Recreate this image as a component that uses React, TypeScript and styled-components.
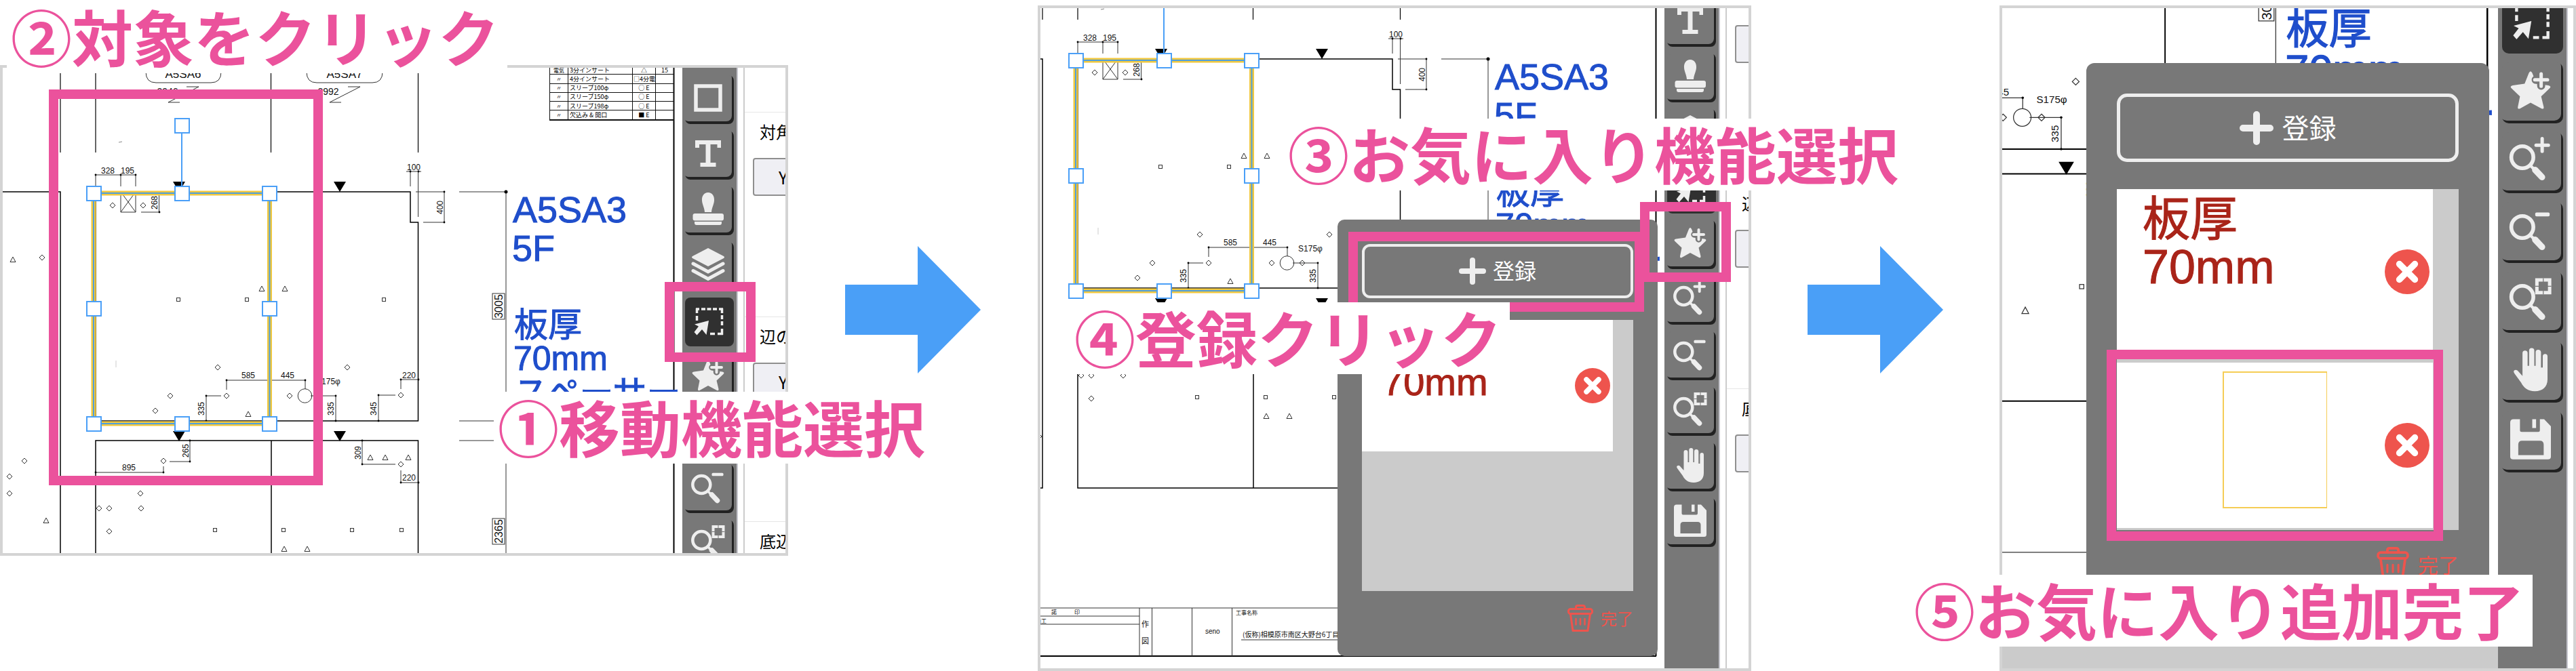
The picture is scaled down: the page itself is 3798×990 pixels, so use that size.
import React from "react";
import styled, { createGlobalStyle } from "styled-components";

const PINK = "#eb529c";
const GRAY = "#787878";
const LIGHT = "#eeeeee";
const BLUE = "#4a9ff7";
const SANS = `"Liberation Sans", "Noto Sans CJK JP", sans-serif`;
const JP = `"Noto Sans CJK JP", "Liberation Sans", sans-serif`;

const GlobalStyle = createGlobalStyle`
  * { box-sizing: border-box; }
  body { margin: 0; background: #fff; font-family: ${JP}; }
  button { font: inherit; color: inherit; margin: 0; padding: 0; border: 0; background: none; cursor: pointer; }
`;

type Sized = { $large?: boolean };
const size = (normal: number, large: number) => (p: Sized) => `${p.$large ? large : normal}px`;

/* ---------- page ---------- */

const Page = styled.main`
  display: grid;
  grid-template-columns: 1162fr 368px 1052fr 366px 850fr;
  align-items: start;
  overflow: hidden;
`;

const Step = styled.section<{ $top: number }>`
  position: relative;
  min-width: 0;
  padding-top: ${(p) => p.$top}px;
`;

const Shot = styled.div<{ $height: number }>`
  display: flex;
  height: ${(p) => p.$height}px;
  border: 4px solid #d4d4d4;
  overflow: hidden;
`;

const Workspace = styled.div`
  position: relative;
  flex: 1;
  min-width: 0;
  overflow: hidden;
`;

const ArrowCell = styled.div`
  display: flex;
  justify-content: center;
  padding-top: 363px;
`;

const StepLabel = styled.h2<{ $left: number; $top: number }>`
  position: absolute;
  z-index: 3;
  left: ${(p) => p.$left}px;
  top: ${(p) => p.$top}px;
  margin: 0;
  padding: 0 12px 6px 6px;
  background: #fff;
  color: ${PINK};
  font-size: 90px;
  line-height: 100px;
  font-weight: 700;
  white-space: nowrap;
`;

const Highlight = styled.div<{ $left: number; $top: number; $width: number; $height: number }>`
  position: absolute;
  z-index: 2;
  left: ${(p) => p.$left}px;
  top: ${(p) => p.$top}px;
  width: ${(p) => p.$width}px;
  height: ${(p) => p.$height}px;
  border: 14px solid ${PINK};
  pointer-events: none;
`;

/* ---------- toolbar ---------- */

const Toolbar = styled.nav<Sized>`
  flex: none;
  width: ${size(80, 101)};
  background: ${GRAY};
  overflow: hidden;
`;

const ToolList = styled.div<Sized & { $offset: number }>`
  display: flex;
  flex-direction: column;
  align-items: center;
  gap: ${size(10, 13)};
  margin-top: ${(p) => p.$offset}px;
`;

const ToolButton = styled.button<Sized & { $active?: boolean }>`
  width: ${size(72, 90)};
  height: ${size(72, 90)};
  padding: ${(p) => (p.$large ? "12px 18px 18px 12px" : "10px 14px 14px 10px")};
  border-radius: ${size(8, 10)};
  background: ${(p) => (p.$active ? "#303030" : GRAY)};
  box-shadow: ${(p) => (p.$active ? "none" : "inset -3px -4px 0 #222")};
  svg { display: block; width: 100%; height: 100%; overflow: visible; }
`;

const Gutter = styled.div<{ $width: number }>`
  flex: none;
  width: ${(p) => p.$width}px;
  border-left: 2px solid #c6c6ce;
  background: #fff;
`;

/* ---------- side panel ---------- */

const SidePanel = styled.aside<{ $width: number }>`
  flex: none;
  width: ${(p) => p.$width}px;
  border-left: 2px solid #cccccc;
  overflow: hidden;
`;

const SideList = styled.div<{ $offset: number }>`
  margin-top: ${(p) => p.$offset}px;
`;

const Field = styled.div`
  width: 240px;
  padding: 14px 12px 178px;
  border-top: 1px solid #e6e6e6;
`;

const FieldName = styled.div`
  padding-left: 10px;
  margin-bottom: 25px;
  font-size: 24px;
  line-height: 28px;
  color: #000;
`;

const FieldButton = styled.button`
  display: block;
  width: 180px;
  height: 56px;
  padding-left: 36px;
  border: 2px solid #8f8f8f;
  border-radius: 4px;
  background: #efeff4;
  font-size: 25px;
  line-height: 28px;
  text-align: left;
`;

/* ---------- favourites popup ---------- */

const Popup = styled.div<Sized>`
  position: absolute;
  top: ${size(312, 81)};
  right: ${size(10, 13)};
  display: flex;
  flex-direction: column;
  width: ${size(472, 594)};
  height: ${size(644, 811)};
  padding: ${size(36, 45)};
  border-radius: ${size(10, 12)};
  background: ${GRAY};
`;

const RegisterButton = styled.button<Sized>`
  display: flex;
  flex: none;
  align-items: center;
  justify-content: center;
  gap: ${size(10, 13)};
  height: ${size(80, 101)};
  padding-bottom: 4px;
  border: ${size(4, 5)} solid ${LIGHT};
  border-radius: ${size(12, 15)};
  color: #fff;
  font-size: ${size(32, 40)};
  line-height: ${size(36, 44)};
  svg { width: ${size(40, 50)}; height: ${size(40, 50)}; margin-top: 4px; }
`;

const FavoriteList = styled.ul<Sized>`
  flex: none;
  display: flex;
  flex-direction: column;
  gap: ${size(10, 12)};
  height: ${size(400, 503)};
  margin: ${size(32, 40)} 0 ${size(20, 25)};
  padding: 0 ${size(30, 38)} 0 0;
  background: #cbcbcb;
  list-style: none;
`;

const Favorite = styled.li<Sized>`
  display: flex;
  align-items: center;
  height: ${size(194, 244)};
  padding-right: ${size(4, 5)};
  background: #fff;
`;

const NoteThumb = styled.div<Sized>`
  flex: 1;
  align-self: flex-start;
  padding: ${(p) => (p.$large ? "10px 0 0 38px" : "8px 0 0 30px")};
  color: #a92419;
  font-family: ${SANS};
  font-size: ${size(56, 70)};
  line-height: ${size(56, 70)};
  -webkit-text-stroke: 1px #a92419;
`;

const ShapeThumb = styled.div`
  flex: 1;
  align-self: flex-start;
  display: flex;
  justify-content: center;
  padding: 13px 0 0 71px;
`;

const Shape = styled.div`
  width: 154px;
  height: 202px;
  border: 2px solid #f5cd55;
  border-right-width: 1px;
`;

const DeleteButton = styled.button<Sized>`
  flex: none;
  width: ${size(52, 66)};
  height: ${size(52, 66)};
  border-radius: 50%;
  background: #ee544d;
  svg { display: block; width: 100%; height: 100%; }
`;

const DoneButton = styled.button<Sized>`
  display: flex;
  align-items: center;
  align-self: flex-end;
  gap: ${size(11, 13)};
  color: #ee544d;
  font-size: ${size(24, 30)};
  line-height: ${size(40, 50)};
  svg { width: ${size(38, 48)}; height: ${size(40, 50)}; }
`;

/* ---------- legend on the drawing ---------- */

const Legend = styled.table`
  position: absolute;
  top: -4px;
  right: 12px;
  width: 184px;
  height: 82px;
  border-collapse: collapse;
  table-layout: fixed;
  color: #000;
  font-size: 9px;
  line-height: 9px;
  td {
    padding: 0 1px;
    border: 1px solid #111;
    overflow: hidden;
    white-space: nowrap;
  }
  td:nth-child(1) { width: 27px; font-size: 8px; text-align: center; }
  td:nth-child(2) { width: 95px; padding-left: 2px; }
  td:nth-child(3) { width: 34px; text-align: center; }
  td:nth-child(4) { text-align: center; }
`;

const legendRows = [
  ["電気", "3分インサート", "△", "15"],
  ["〃", "4分インサート", "□4分電", ""],
  ["〃", "スリーブ100φ", "○ E", ""],
  ["〃", "スリーブ150φ", "○ E", ""],
  ["〃", "スリーブ198φ", "○ E", ""],
  ["〃", "欠込み & 開口", "■ E", ""],
  ["", "", "", ""],
];

/* ---------- floor plan ---------- */

const Plan = styled.svg`
  display: block;
  width: 100%;
  height: 100%;
`;

type P = [number, number];
const diamonds: P[] = [
  [166, 303], [211, 303], [62, 380], [321, 542], [512, 542], [251, 584], [334, 584],
  [427, 584], [472, 584], [229, 606], [591, 583], [241, 680], [591, 685], [36, 680],
  [14, 703], [14, 728], [207, 728], [146, 750], [161, 750], [208, 750], [161, 784], [84, 840],
];
const triangles: P[] = [
  [19, 383], [386, 426], [420, 426], [366, 611], [546, 675], [568, 675], [602, 675],
  [68, 768], [419, 810], [453, 810],
];
const squares: P[] = [[263, 442], [364, 442], [566, 442], [317, 782], [418, 782], [519, 782], [592, 782]];
const arrows: P[] = [[264, 268], [501, 268], [264, 636], [501, 636]];
const handles: P[] = [
  [138, 285], [268, 285], [397, 285], [138, 455], [397, 455], [138, 625], [268, 625], [397, 625], [268, 185],
];
const dots: P[] = [
  [141, 258], [178, 258], [200, 258], [605, 253], [617, 253], [655, 283], [655, 328], [235, 313],
  [334, 561], [450, 561], [304, 584], [304, 621], [495, 584], [495, 621], [558, 583], [558, 621],
  [591, 560], [617, 560], [280, 681], [280, 650], [141, 697], [241, 697], [534, 650], [534, 685],
  [591, 712], [617, 712],
];
const dims: [string, number, number][] = [
  ["328", 159, 256], ["195", 188, 256], ["100", 610, 251], ["585", 366, 558], ["445", 424, 558],
  ["220", 603, 558], ["895", 190, 694], ["220", 603, 709],
];
const uprightDims: [string, number, number][] = [
  ["268", 228, 299], ["400", 649, 306], ["335", 297, 603], ["335", 488, 603], ["345", 551, 603],
  ["265", 274, 665], ["309", 528, 668],
];

function FloorPlan({ view }: { view: string }) {
  return (
    <Plan viewBox={view} preserveAspectRatio="xMinYMin slice" role="img" aria-label="図面">
      <rect x="0" y="1198" width="1006" height="60" fill="#cbcbcb" />
      <g fill="none" stroke="#000" strokeWidth="1.5">
        <path d="M0 283H89V916H0M141 916V650H616.500V916ZM400 650V916M141 621V283H605V328H616.500V621ZM400 283V621" />
        <path d="M993.500 0V1164" strokeWidth="2" />
        <path d="M0 1164H994" strokeWidth="2" />
      </g>
      <g fill="none" stroke="#333" strokeWidth="1">
        <path d="M89 90V225M141 90V225M399.500 90V225M616.500 90V225" stroke="#000" strokeWidth="1.200" />
        <path d="M215 90V106Q215 122 230 122H311Q326 122 326 106V90M452 90V106Q452 122 467 122H549Q564 122 564 106V90" />
        <path d="M275 128H293L248 151H265M513 128H531L486 151H503" />
        <path d="M175 210L180 209" stroke="#888" />
        <path d="M171 532V542" stroke="#ccc" />
        <path d="M141 275V258H200V275M178 258V275M178 283V313H200V283M178 283L200 313M200 283L178 313" />
        <path d="M234.500 283V313M208 313H235" />
        <path d="M599 253H621M605 253V275M616.500 253V320M613 283H655V328H624" />
        <path d="M677 283H746V577M746 577V900M677 621H728M677 650H728" />
        <path d="M334 575V561H450V574M304 621V584H326M458 584H495V621M558 621V583H583M591 574V560H616" />
        <path d="M280 650V681H250M141 697H241V688M534 650V685H583M591 694V712H616" />
        <circle cx="449.500" cy="584" r="10.300" />
        <rect x="726" y="433" width="18" height="38" />
        <rect x="726" y="765" width="18" height="38" />
        {diamonds.map(([x, y], i) => (
          <path key={i} d={`M${x} ${y - 4}l4 4l-4 4l-4 -4Z`} />
        ))}
        {triangles.map(([x, y], i) => (
          <path key={i} d={`M${x} ${y - 4}l4 7.500h-8Z`} />
        ))}
        {squares.map(([x, y], i) => (
          <rect key={i} x={x - 2.5} y={y - 2.5} width="5" height="5" />
        ))}
        <path d="M0 1093H994M0 1105H232M0 1117H232M232 1093V1164M250.500 1093V1164M309.500 1093V1164M368.500 1093V1164M382 1140H600" />
      </g>
      <g fill="#000">
        {dots.map(([x, y], i) => (
          <circle key={i} cx={x} cy={y} r="1.400" />
        ))}
        <circle cx="746" cy="283" r="2.500" />
        {arrows.map(([x, y], i) => (
          <path key={i} d={`M${x - 9} ${y}h18l-9 15Z`} />
        ))}
      </g>
      <g fill="#111" fontFamily={SANS} fontSize="12" textAnchor="middle">
        {dims.map(([t, x, y], i) => (
          <text key={i} x={x} y={y}>{t}</text>
        ))}
        {uprightDims.map(([t, x, y], i) => (
          <text key={i} transform={`translate(${x + 4} ${y}) rotate(-90)`}>{t}</text>
        ))}
        <text x="484" y="567">S175φ</text>
        <text x="247" y="140" fontSize="14">3946</text>
        <text x="484" y="140" fontSize="14">2992</text>
        <text x="270" y="115" fontSize="17">A5SA6</text>
        <text x="508" y="115" fontSize="17">A5SA7</text>
        <text transform="translate(741 452) rotate(-90)" fontSize="16">3005</text>
        <text transform="translate(741 784) rotate(-90)" fontSize="16">2365</text>
      </g>
      <g fill="#111" fontFamily={JP} fontSize="8">
        <text x="102" y="1102">諾</text>
        <text x="136" y="1102">印</text>
        <text x="79" y="1115">施工</text>
        <text x="235" y="1121" fontSize="11">作</text>
        <text x="235" y="1146" fontSize="11">図</text>
        <text x="329" y="1131" fontSize="10" fontFamily={SANS}>seno</text>
        <text x="374" y="1103">工事名称</text>
        <text x="384" y="1136" fontSize="10">(仮称)相模原市南区大野台6丁目</text>
      </g>
      <g fill="#1f4ecb" stroke="#1f4ecb" strokeWidth="1" fontFamily={SANS}>
        <text x="756" y="328" fontSize="54">A5SA3</text>
        <text x="755" y="385" fontSize="54">5F</text>
        <text x="758" y="497" fontSize="50">板厚</text>
        <text x="757" y="546" fontSize="50">70mm</text>
        <text x="758" y="597" fontSize="50">スペーサー</text>
      </g>
      <g fill="none">
        <rect x="138" y="285" width="259.500" height="340" stroke="#f0c840" strokeWidth="7" />
        <rect x="138" y="285" width="259.500" height="340" stroke="#4f9fdc" strokeWidth="2" />
        <path d="M268 185V285" stroke={BLUE} strokeWidth="2" />
        {handles.map(([x, y], i) => (
          <rect key={i} x={x - 10} y={y - 10} width="21" height="21" fill="#fff" stroke={BLUE} strokeWidth="2" />
        ))}
      </g>
    </Plan>
  );
}

/* ---------- icons ---------- */

const lens = (
  <>
    <circle cx="14.300" cy="20" r="13" fill="none" stroke={LIGHT} strokeWidth="4.500" />
    <path d="M24 30L28 34" stroke={LIGHT} strokeWidth="3.500" />
    <path d="M29.500 35L37.500 43.500" stroke={LIGHT} strokeWidth="7.500" strokeLinecap="round" />
  </>
);

const icons: Record<string, React.ReactNode> = {
  四角形: <rect x="6" y="6" width="36" height="35" fill="none" stroke={LIGHT} strokeWidth="5.500" />,
  文字: <path d="M5 4H43V15H37.500V10H27.500V37H35.500V43H12.500V37H20.500V10H11V15H5Z" fill={LIGHT} />,
  スタンプ: (
    <g fill={LIGHT}>
      <path d="M24 -1C30 -1 33.500 4 33 11C32.500 17 29.500 21 29 28H19C18.500 21 15.500 17 15 11C14.500 4 18 -1 24 -1Z" />
      <rect x="1.500" y="30" width="45.500" height="10.500" rx="3" />
      <path d="M4 42H44V44Q44 47 41 47H7Q4 47 4 44Z" />
    </g>
  ),
  レイヤー: (
    <g fill={LIGHT}>
      <path d="M24 -1L47 11Q49 12.500 47 14L24 26L1 14Q-1 12.500 1 11Z" />
      <path d="M2 22L24 34L46 22M2 32.500L24 44.500L46 32.500" fill="none" stroke={LIGHT} strokeWidth="5" strokeLinecap="round" />
    </g>
  ),
  移動: (
    <g fill="none" stroke={LIGHT} strokeWidth="3.500">
      <path d="M6 7H11M14 7H20M22.500 7H28.500M31 7H37M40 7H46M7.500 6V13M7.500 17V24M44.500 6V13M44.500 16V22M44.500 25V31M44.500 36V45M46 43.500H38M34 43.500H27" />
      <path d="M25 24L4 29.500L10 32.500L3.500 41L7.500 45.500L15 37L21.500 45Z" fill={LIGHT} stroke="none" />
    </g>
  ),
  お気に入り: (
    <>
      <path
        d="M22 3Q24 -1 26 3L31 15.500L45 17.500Q49 18.500 46.500 21L36.500 30.500L39.500 43Q40 46 37 45L24 38L11.500 45Q8.500 46 9 43L11.500 30.500L1.500 21Q-1 18.500 3 17.500L17 15.500Z"
        fill={LIGHT}
      />
      <path d="M36.500 5V18M30 11H43" stroke={GRAY} strokeWidth="9.500" strokeLinecap="round" />
      <path d="M36.500 4V18.500M29 11H44" stroke={LIGHT} strokeWidth="4" strokeLinecap="round" />
    </>
  ),
  拡大: <>{lens}<path d="M37.700 -2V13M30.500 5.700H45" stroke={LIGHT} strokeWidth="4" strokeLinecap="round" /></>,
  縮小: <>{lens}<rect x="29.500" y="2.700" width="17" height="4.600" rx="1.500" fill={LIGHT} /></>,
  範囲拡大: (
    <>
      {lens}
      <rect x="31.500" y="0" width="15" height="15" fill="none" stroke={LIGHT} strokeWidth="4" />
      <path d="M39 -2V4M39 11V17M29.500 7.500H36M42 7.500H48.500" stroke={GRAY} strokeWidth="1" />
    </>
  ),
  手のひら: (
    <path
      d="M14.500 31V4Q14.500 1 17.500 1T20.500 4V19H22.300V1Q22.300 -2 25.300 -2T28.400 1V19H30V3Q30 0 33 0T36.300 3V21H38.400V8Q38.400 5 41.200 5T44 8V35C44 44 38 49 29 49C21 49 16 45 13 39L5 28Q3 25 5.500 24Q8 23 10 26Z"
      fill={LIGHT}
    />
  ),
  保存: (
    <path
      fillRule="evenodd"
      d="M4 -0.500H11.500V12.500Q11.500 14.500 13.500 14.500H33Q35 14.500 35 12.500V-0.500H40L48 8V43.500Q48 47 44.500 47H3.500Q0 47 0 43.500V3.500Q0 -0.500 4 -0.500ZM14 25Q9.500 25 9.500 29.500V42H39.500V29.500Q39.500 25 35 25ZM26 -0.500H30.500V10H26Z"
      fill={LIGHT}
    />
  ),
};

const allTools = Object.keys(icons);

function Tools({ from, offset, large }: { from: string; offset: number; large?: boolean }) {
  return (
    <Toolbar $large={large} aria-label="ツール">
      <ToolList $large={large} $offset={offset}>
        {allTools.slice(allTools.indexOf(from)).map((name) => (
          <ToolButton key={name} type="button" aria-label={name} $large={large} $active={name === "移動"}>
            <svg viewBox="0 0 48 48">{icons[name]}</svg>
          </ToolButton>
        ))}
      </ToolList>
    </Toolbar>
  );
}

function Fields({ width, offset }: { width: number; offset: number }) {
  return (
    <SidePanel $width={width}>
      <SideList $offset={offset}>
        {["対角", "辺の", "底辺"].map((name, i) => (
          <Field key={name}>
            <FieldName id={`f${width}-${i}`}>{name}</FieldName>
            <FieldButton type="button" aria-labelledby={`f${width}-${i}`}>Y</FieldButton>
          </Field>
        ))}
      </SideList>
    </SidePanel>
  );
}

function Delete({ large }: { large?: boolean }) {
  return (
    <DeleteButton type="button" aria-label="削除" $large={large}>
      <svg viewBox="0 0 52 52">
        <path d="M17 17L35 35M35 17L17 35" stroke="#fff" strokeWidth="7.500" strokeLinecap="round" />
      </svg>
    </DeleteButton>
  );
}

function Favorites({ large }: { large?: boolean }) {
  return (
    <Popup $large={large}>
      <RegisterButton type="button" $large={large}>
        <svg viewBox="0 0 40 40" aria-hidden="true">
          <path d="M20 4V36M4 20H36" stroke={LIGHT} strokeWidth="8" strokeLinecap="round" />
        </svg>
        登録
      </RegisterButton>
      <FavoriteList $large={large}>
        <Favorite $large={large}>
          <NoteThumb $large={large}>板厚<br />70mm</NoteThumb>
          <Delete large={large} />
        </Favorite>
        {large && (
          <Favorite $large>
            <ShapeThumb><Shape /></ShapeThumb>
            <Delete large />
          </Favorite>
        )}
      </FavoriteList>
      <DoneButton type="button" $large={large}>
        <svg viewBox="0 0 38 40" fill="none" stroke="#ee544d" strokeWidth="3" strokeLinecap="round" strokeLinejoin="round" aria-hidden="true">
          <rect x="1.500" y="6.500" width="35" height="7" rx="3" />
          <path d="M12.500 6V4Q12.500 1.500 15 1.500H23Q25.500 1.500 25.500 4V6M4.500 14L8 38.500H30L33.500 14" />
          <path d="M12.500 21V29.500M19 21V29.500M25.500 21V29.500" strokeWidth="2.500" />
        </svg>
        完了
      </DoneButton>
    </Popup>
  );
}

function Arrow() {
  return (
    <ArrowCell>
      <svg width="200" height="188" viewBox="0 0 200 188" aria-hidden="true">
        <path d="M0 57H107V0L200 94L107 188V131H0Z" fill={BLUE} />
      </svg>
    </ArrowCell>
  );
}

export default function App() {
  return (
    <>
      <GlobalStyle />
      <Page>
        <Step $top={96}>
          <Shot $height={724}>
            <Workspace>
              <FloorPlan view="4 100 1002 716" />
              <Legend>
                <tbody>
                  {legendRows.map((row, i) => (
                    <tr key={i}>{row.map((cell, j) => <td key={j}>{cell}</td>)}</tr>
                  ))}
                </tbody>
              </Legend>
            </Workspace>
            <Tools from="四角形" offset={11} />
            <Gutter $width={10} />
            <Fields width={62} offset={65} />
          </Shot>
          <Highlight $left={72} $top={132} $width={404} $height={584} />
          <Highlight $left={980} $top={416} $width={134} $height={118} />
          <StepLabel $left={10} $top={2}>②対象をクリック</StepLabel>
          <StepLabel $left={728} $top={578}>①移動機能選択</StepLabel>
        </Step>
        <Arrow />
        <Step $top={8}>
          <Shot $height={982}>
            <Workspace>
              <FloorPlan view="86 208 920 974" />
              <Favorites />
            </Workspace>
            <Tools from="文字" offset={-15} />
            <Gutter $width={10} />
            <Fields width={34} offset={-43} />
          </Shot>
          <Highlight $left={458} $top={342} $width={436} $height={118} />
          <Highlight $left={888} $top={298} $width={134} $height={118} />
          <StepLabel $left={363} $top={175}>③お気に入り機能選択</StepLabel>
          <StepLabel $left={48} $top={446}>④登録クリック</StepLabel>
        </Step>
        <Arrow />
        <Step $top={8}>
          <Shot $height={982}>
            <Workspace>
              <FloorPlan view="426 456 580 773" />
              <Favorites large />
            </Workspace>
            <Tools from="移動" offset={-23} large />
            <Gutter $width={10} />
          </Shot>
          <Highlight $left={158} $top={516} $width={496} $height={282} />
          <StepLabel $left={-132} $top={848}>⑤お気に入り追加完了</StepLabel>
        </Step>
      </Page>
    </>
  );
}
